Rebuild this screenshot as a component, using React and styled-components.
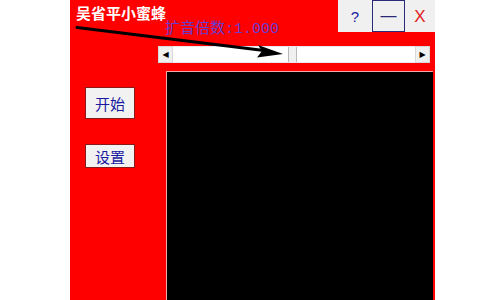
import React from 'react';
import styled, { createGlobalStyle } from 'styled-components';

const GlobalStyle = createGlobalStyle`
  html, body {
    margin: 0;
    padding: 0;
    background: #fff;
  }
  body {
    font-family: 'Noto Sans CJK SC', 'Liberation Sans', sans-serif;
  }
`;

const Page = styled.div`
  display: flex;
  height: 300px;
  overflow: hidden;
`;

const Window = styled.div`
  position: relative;
  margin-left: 70px;
  width: 365px;
  height: 300px;
  background: #ff0000;
  display: grid;
  grid-template-columns: 88px 1fr;
`;

const Sidebar = styled.div`
  display: flex;
  flex-direction: column;
  align-items: flex-start;
`;

const Title = styled.div`
  padding: 3px 0 0 6px;
  height: 87px;
  box-sizing: border-box;
  color: #fff;
  font-size: 15px;
  font-weight: bold;
  line-height: 20px;
  white-space: nowrap;
`;

const SideButton = styled.button`
  margin-left: 15px;
  margin-bottom: ${p => p.$gap || 0}px;
  width: 50px;
  height: ${p => p.$h}px;
  padding: 0;
  background: #f2f2f2;
  border: 1px solid #8a1a1a;
  color: #1a1aa0;
  font-family: 'Noto Sans CJK SC', sans-serif;
  font-size: 15px;
  line-height: 1;
`;

const Main = styled.div`
  display: flex;
  flex-direction: column;
`;

const TopRow = styled.div`
  display: flex;
  align-items: flex-start;
  height: 46px;
`;

const Label = styled.div`
  margin: 21px 0 0 7px;
  color: #6a3ccc;
  font-family: 'Liberation Mono', 'Noto Sans CJK SC', monospace;
  font-size: 15px;
  line-height: 18px;
  white-space: nowrap;
`;

const CaptionButtons = styled.div`
  margin-left: auto;
  display: flex;
  height: 32px;
`;

const CaptionButton = styled.button`
  width: ${p => p.$w || 33}px;
  height: 32px;
  padding: 0;
  background: #f0f0f0;
  border: 1px solid ${p => (p.$focus ? '#2a2a78' : '#f0f0f0')};
  color: ${p => p.$color};
  font-family: 'Liberation Sans', sans-serif;
  font-size: ${p => p.$size || 16}px;
  line-height: 1;
`;

const ScrollBar = styled.div`
  display: flex;
  width: 272px;
  height: 17px;
  background: #fff;
  box-sizing: border-box;
`;

const ScrollArrow = styled.div`
  width: 15px;
  height: 17px;
  box-sizing: border-box;
  background: #f0f0f0;
  border: 1px solid #d8d8d8;
  display: flex;
  align-items: center;
  justify-content: center;
  color: #000;
  font-size: 8px;
  font-family: 'DejaVu Sans', sans-serif;
`;

const Track = styled.div`
  flex: 1;
  display: flex;
  align-items: stretch;
  padding-left: ${p => p.$offset}px;
  border-top: 1px solid #e8e8e8;
  border-bottom: 1px solid #e8e8e8;
`;

const Thumb = styled.div`
  width: 7px;
  background: #f0f0f0;
  border: 1px solid #b8b8b8;
  border-top: none;
  border-bottom: none;
`;

const Display = styled.div`
  margin: 8px 2px 0 8px;
  flex: 1;
  background: #000;
  border-top: 1px solid #f3a8a8;
  border-left: 1px solid #f3a8a8;
`;

const Annotation = styled.svg`
  position: absolute;
  left: 0;
  top: 0;
  pointer-events: none;
`;

export default function App() {
  return (
    <>
      <GlobalStyle />
      <Page>
        <Window>
          <Sidebar>
            <Title>吴省平小蜜蜂</Title>
            <SideButton $h={32} $gap={25}>开始</SideButton>
            <SideButton $h={24}>设置</SideButton>
          </Sidebar>
          <Main>
            <TopRow>
              <Label>扩音倍数:1.000</Label>
              <CaptionButtons>
                <CaptionButton $w={34} $color="#2020a0" $size={15}>?</CaptionButton>
                <CaptionButton $focus $color="#2a2a78" $size={16}>—</CaptionButton>
                <CaptionButton $w={30} $color="#e02020" $size={17}>X</CaptionButton>
              </CaptionButtons>
            </TopRow>
            <ScrollBar>
              <ScrollArrow>◀</ScrollArrow>
              <Track $offset={115}>
                <Thumb />
              </Track>
              <ScrollArrow>▶</ScrollArrow>
            </ScrollBar>
            <Display />
          </Main>
          <Annotation width="365" height="300" viewBox="70 0 365 300">
            <path d="M77 27.5 L264 50.5" stroke="#000" strokeWidth="3" strokeLinecap="round" />
            <path d="M283 54 L258 45 L262 51 L257 57.5 Z" fill="#000" />
          </Annotation>
        </Window>
      </Page>
    </>
  );
}
